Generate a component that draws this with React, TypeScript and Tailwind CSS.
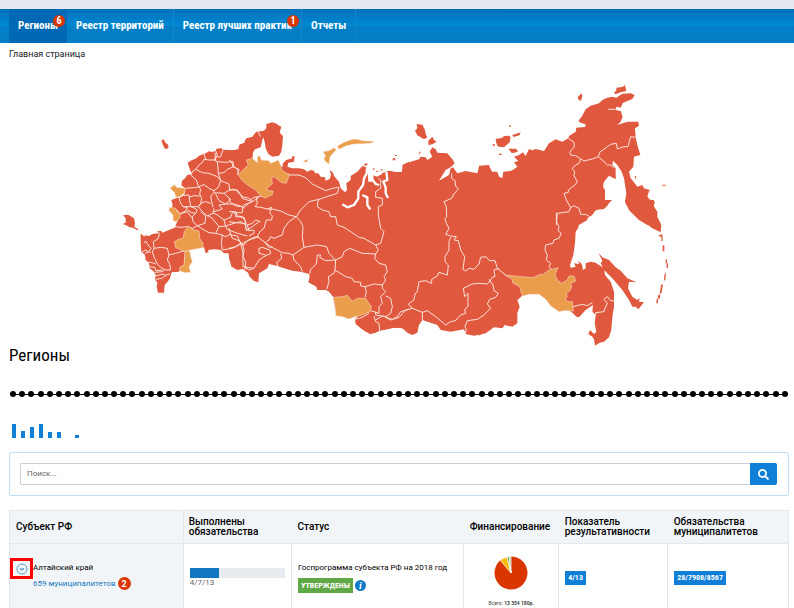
import React, { useState } from 'react'
import { FaSearch } from 'react-icons/fa'

const NAV = [
  { name: 'Регионы', href: '#regions', badge: 6, active: true },
  { name: 'Реестр территорий', href: '#territories' },
  { name: 'Реестр лучших практик', href: '#practices', badge: 1 },
  { name: 'Отчеты', href: '#reports' },
]

const BARS = [14, 7, 11, 14, 6, 6, 0, 3]

// Each part of the map has its own origin and is drawn at triple scale
const MAP = [
  {
    id: 'west',
    transform: 'translate(110 110) scale(0.33333)',
    land: [
      'M425 82 412 85 408 98 392 103 388 118 370 121 342 119 338 115 322 116 320 122 310 126 300 124 290 130 270 137 262 145 245 152 236 158 240 170 244 182 250 192 235 195 228 205 219 212 217 226 228 234 228 245 225 256 215 262 203 264 187 270 191 285 188 292 200 296 215 311 210 325 200 345 200 352 180 360 160 368 157 363 145 363 147 370 130 372 120 378 108 376 106 380 95 370 95 400 97 425 108 435 110 450 120 460 122 475 135 485 140 495 138 508 145 518 143 530 147 548 165 548 167 525 176 515 183 505 188 487 210 485 215 470 225 465 228 424 255 418 285 412 290 430 298 427 298 420 315 418 335 420 345 430 358 430 362 445 368 453 368 470 385 478 400 470 405 480 420 490 425 503Z',
      'M42 316 58 314 75 325 78 340 76 350 88 358 85 361 72 353 62 352 50 345 40 342 50 338 50 325Z',
      'M157 92 165 88 168 97 178 105 178 115 168 117 162 105Z',
    ],
    accent: [
      'M183 235 196 224 203 232 230 235 226 250 212 260 200 262 197 248Z',
      'M181 292 200 295 203 303 215 311 212 325 202 335 192 332 192 315 180 302Z',
      'M238 348 250 358 270 363 272 385 282 400 282 412 255 418 240 420 228 425 200 413 196 395 208 388 222 385 226 365Z',
      'M228 424 242 422 245 438 250 455 240 470 245 487 230 488 213 484 212 472 225 465Z',
    ],
    borders: [
      'M320 122 325 135 315 150 300 150 285 148 280 158 270 165 260 178 252 183 245 195',
      'M285 130 290 148M342 119 335 140 320 142 M318 128 320 152',
      'M315 150 325 155 350 157 372 155 374 170 355 178 345 188 328 190 325 155',
      'M260 178 280 188 300 190 325 200 335 212 328 232 315 242 300 235 285 224 275 228 265 232 230 235',
      'M245 195 262 210 268 228M328 190 335 212 360 222 362 240 345 250 315 248 315 242',
      'M374 170 385 178 390 190M362 240 370 238 385 240 400 260 420 265 430 275 450 262',
      'M315 248 305 258 308 275 312 292M345 250 365 268 350 282 330 272 320 252',
      'M350 282 330 285 340 297 315 305M350 282 375 282 400 290 405 285 430 275',
      'M268 228 275 238 272 252 278 265 275 280 268 290 245 290 242 272 240 255 225 256',
      'M240 262 255 257 272 258M210 260 213 275 222 290 235 292 230 303 215 311',
      'M315 295 312 310 295 318 280 305 268 290 278 278 290 275 305 280',
      'M222 290 245 290 258 295 265 300 260 310 248 308 235 300M260 310 250 320 252 335 265 347 288 340 290 318 275 305',
      'M215 311 235 305 250 325M200 350 215 352 235 350 250 355 265 347 285 360 300 368 320 370 330 350 310 325 295 316',
      'M312 308 325 315 345 330 365 322 370 308 400 308 402 290M345 330 350 348 375 340 395 335 410 345 412 362 430 350 450 335',
      'M330 350 350 348 355 358 385 370 415 378M320 370 340 375 337 400 340 420',
      'M340 375 350 380 365 372 370 385 390 392 400 402M340 420 370 415 390 405 400 400 425 388 450 380',
      'M378 308 380 320 405 322 412 345M400 402 405 420 402 440 410 455 408 480',
      'M150 365 150 378 145 388 133 395 135 415 155 412 175 415 180 435 200 430 228 422',
      'M180 435 175 450 182 462 185 480 170 480 155 472 145 462 135 440 130 425 135 415',
      'M97 428 108 420 125 428M105 400 110 393 117 405 126 415 120 425 108 430M110 455 130 458 140 462M120 470 138 472 140 482 160 480',
      'M138 487 160 485 168 478M138 498 165 492 172 500M140 508 160 505 170 495 183 492',
    ],
  },
  {
    id: 'north',
    transform: 'translate(230 110) scale(0.33333)',
    land: [
      'M0 122 28 120 30 108 45 100 50 88 70 80 82 65 105 62 112 55 112 42 130 37 145 42 148 46 157 50 152 68 162 78 160 105 157 125 150 137 130 140 118 132 110 115 108 100 103 82 100 90 95 112 78 118 72 128 70 150 88 160 120 160 150 160 160 172 162 160 172 150 190 145 188 140 197 138 195 155 178 158 175 170 190 175 210 175 225 178 235 185 245 180 255 182 258 190 268 190 275 200 288 202 290 212 302 207 306 195 302 180 312 188 315 198 330 215 335 235 348 247 354 240 352 220 365 210 365 198 385 185 400 168 412 172 416 185 418 215 430 215 430 195 445 200 460 190 480 182 500 186 520 186 520 165 540 155 540 668 525 655 500 652 480 655 452 662 440 668 425 672 410 665 395 655 380 642 378 628 390 615 320 605 312 560 300 545 290 540 265 540 262 530 238 517 242 500 240 492 215 485 190 482 160 473 145 468 120 462 115 475 90 490 88 517 75 513 62 500 55 483 40 477 25 480 8 470 0 445Z',
      'M405 162 413 160 417 166 408 168Z',
      'M432 175h4v4h-4zM442 183h5v3h-5zM455 178h5v4h-5zM462 188h4v4h-4zM490 148h10v3h-10zM498 135h5v3h-5z',
    ],
    accent: [
      'M28 195 50 172 58 165 52 150 70 145 85 158 85 140 93 138 97 150 120 152 125 160 148 150 155 165 158 180 172 190 182 192 172 220 158 218 135 200 128 205 130 222 113 235 118 242 132 243 130 255 120 258 110 265 95 258 80 240 60 228 40 212Z',
      'M325 108 345 97 370 88 385 88 400 92 432 94 433 98 405 101 375 102 350 108 330 118Z',
      'M282 125 300 122 315 113 322 120 312 130 303 140 300 163 288 153 285 145 290 138Z',
      'M223 153 235 148 237 155 228 157Z',
      'M312 562 340 560 355 556 370 574 385 565 410 565 420 580 427 590 423 605 400 615 378 620 360 627 340 620 320 617 320 590Z',
    ],
    borders: [
      'M0 150 8 155 12 170 30 178 25 195M85 62 95 80M0 240 20 240 35 255 40 265 60 272 75 262 98 258',
      'M0 265 5 278 20 288 40 290 42 295 65 275 70 270M82 262 85 280 78 290 95 292 115 297 128 292 122 308 130 318 128 330 112 330 105 355 95 362 85 378',
      'M115 297 135 298 155 303 180 315 202 320 215 335 222 350 220 380 225 412 192 435 180 430 160 428 125 410 105 395 85 380',
      'M202 320 180 335 165 355 160 375 135 385 125 380 120 390 112 395M202 320 215 300 240 275 270 268 300 258 325 250 330 232 310 235 290 242 250 222 230 203 210 195 180 195',
      'M268 268 265 290 280 300 300 305 305 320 320 320 325 345 345 352 365 365 390 382 405 385 440 405',
      'M440 405 455 400 465 365 455 355 448 315 448 290 460 285 460 265 440 262 440 245 455 235 455 210 448 205',
      'M225 412 265 405 293 410 300 430 320 450 340 440 345 425 362 415 380 422 400 430 440 432 448 420 440 405',
      'M440 432 437 445 450 460 470 465 475 485 465 500 470 510 460 525 435 522 408 530 395 528 395 517 375 515 370 505 350 500 318 480 320 450',
      'M192 435 195 450 215 470 220 485M155 430 158 445 143 458 147 470M320 450 290 452 272 442 275 435 265 435 262 462 245 478 242 492',
      'M318 480 315 490 298 500 300 515 293 538M408 530 412 545 408 562M460 525 460 535 470 545 455 560 460 580 450 590 450 610 425 602',
      'M470 558 485 565 490 590 485 610 470 620 440 615 440 605M378 628 400 622 420 610M435 618 440 635 450 640 452 662M440 630 460 618 490 628 505 620 515 605 540 598',
      'M0 305 20 305 25 318 40 320 50 335 50 355 60 362 75 360 75 370 60 378M0 335 20 338 50 340M60 362 55 345 70 340 80 330 95 335',
      'M0 355 5 375 25 378 35 400 45 405 55 392 75 382 85 380M0 415 20 410 35 400 42 430 42 470 75 475 90 450 105 440 125 430 122 420 100 412 90 415 90 430 110 435',
      'M45 470 60 480 75 475M105 395 120 412 130 410',
    ],
    water: [
      'M415 165 413 190 405 205 402 225 388 245 388 265 375 285 355 292 340 283M400 255 415 262 415 285 424 298',
      'M430 185 430 208 440 222 450 225M455 195 450 180M472 185 475 210 463 215 470 232 470 250 477 264',
    ],
  },
  {
    id: 'siberia',
    transform: 'translate(370 110) scale(0.33333)',
    land: [
      'M52 183 80 187 98 187 105 165 125 155 150 148 155 140 170 142 175 150 190 140 182 125 190 112 200 118 205 128 235 130 252 150 257 160 245 172 230 180 210 212 240 195 245 175 252 172 265 190 290 183 325 190 330 170 350 172 355 165 370 185 385 185 390 200 402 205 405 185 405 648 400 655 375 652 350 670 315 677 290 672 285 658 245 665 215 660 205 645 160 630 150 645 145 668 130 675 115 668 100 655 75 653 60 657 30 662 0 672 0 405 52 300Z',
      'M138 62 145 55 143 42 160 44 168 60 170 72 175 82 165 88 145 76Z',
      'M178 92 190 80 195 90 203 95 190 103 178 105Z',
      'M383 88 400 92 415 80 425 82 422 97 405 112 385 108Z',
      'M430 76 450 68 450 76 435 80ZM424 116 442 118 445 125 430 128ZM150 128l6-4-4 10zM72 144h6v4h-6zM78 135h4v3h-4zM372 102h4v4h-4zM391 131h5v3h-5zM420 46h5v3h-5z',
    ],
    accent: [],
    borders: [
      'M248 190 248 205 258 212 260 228 268 237 255 252 248 265 225 275 232 290 233 320 228 325 232 340 240 355 230 373 245 378 262 380 255 390 268 392 275 420 287 440 282 478 290 483 300 475 315 478 330 462 335 442 350 440 362 452 378 452 385 475 410 495',
      'M245 382 240 395 240 420 228 440 228 455 238 465 235 495 210 487 205 498 188 508 188 520 170 512 150 515 145 545 138 552 135 570 118 582 130 595 110 600 90 622 65 630 50 622',
      'M130 595 160 607 175 602 200 620 230 645 245 635 260 632 275 615 290 610 287 598 297 590 297 550 287 560 283 535 310 522 330 520 355 522 365 510 372 500 378 500 375 480 390 475',
      'M360 508 372 525 375 542 388 550 380 562 362 568 355 582 365 595 345 615 325 628 295 632 288 650 292 658 288 672M160 607 160 630',
    ],
  },
  {
    id: 'northeast',
    transform: 'translate(480 75) scale(0.33333)',
    land: [
      'M0 272 30 270 38 290 48 300 70 312 73 290 95 288 105 283 115 275 105 262 118 258 105 245 120 240 132 232 140 243 150 222 160 226 170 222 195 228 210 205 230 193 250 200 268 190 270 183 290 170 292 158 318 156 320 148 305 143 298 138 308 125 320 103 335 92 360 85 370 75 385 68 400 65 412 68 430 56 455 55 467 60 460 72 440 80 432 83 425 98 412 95 410 105 425 108 431 125 425 140 415 150 445 140 478 140 480 152 468 160 470 187 475 210 484 240 465 245 463 275 450 290 455 310 462 318 475 335 490 330 495 340 512 345 505 362 510 372 528 380 522 400 535 412 532 425 545 450 545 455 505 450 480 435 450 405 438 380 442 355 435 310 428 290 415 270 402 257 400 270 410 280 410 313 390 302 375 320 372 335 378 345 378 375 398 375 390 385 385 392 375 402 350 405 340 420 325 430 325 435 300 450 0 450Z',
      'M296 66 308 55 310 65 305 78 298 73ZM405 54 412 46 412 38 430 36 438 30 442 48 425 52 410 58ZM50 192 70 188 75 183 92 182 92 200 80 207 75 215 60 215 52 205Z',
      'M100 180 118 176 125 172 122 180 105 185ZM88 221 110 221 117 228 112 232 98 234ZM467 303 471 303 470 315ZM60 236h8v4h-8zM91 152h4v3h-4zM550 329h10v3h-10zM42 208h5v5h-5z',
    ],
    accent: [],
    borders: [
      'M268 190 285 202 286 215 272 232 275 240 290 242 305 252 300 265 290 270 280 280 287 290 285 302 295 320 288 330 268 345 268 352 255 355 262 375 275 398',
      'M305 252 315 258 340 252 358 245 362 232 385 215 395 208 412 205 415 222 435 215 447 215 455 185 470 187M358 245 375 260 385 270 395 270 405 280',
      'M275 398 285 392 300 400 305 418 320 418 332 425M275 398 270 410 235 415 232 450M388 103 410 103',
    ],
  },
  {
    id: 'far-east',
    transform: 'translate(480 200) scale(0.33333)',
    land: [
      'M400 0 385 10 365 20 345 35 330 50 315 62 300 72 297 85 290 95 288 130 283 165 273 195 275 203 290 200 285 190 300 192 298 182 308 192 312 210 320 205 320 190 335 185 350 188 375 205 378 225 395 245 405 275 405 320 400 350 397 390 390 412 375 425 362 428 348 437 345 418 340 410 328 402 333 390 345 402 352 395 347 370 350 345 340 335 342 315 320 330 300 352 292 350 282 340 240 310 180 275 130 287 115 300 122 320 115 340 115 370 100 380 75 375 45 378 25 392 0 407 0 0Z',
      'M438 0 525 0 522 15 535 35 535 50 547 75 545 97 520 85 490 62 455 35 440 10Z',
      'M358 158 370 172 390 180 410 202 425 212 445 235 472 247 450 245 447 265 460 290 475 300 482 294 480 305 495 307 478 328 470 320 460 320 450 300 430 270 400 235 375 210 365 190 370 182Z',
      'M537 106 550 103 551 122 547 124 547 112ZM551 136h5v18h-5zM560 178h4v12h-4zM563 190h4v14h-4zM556 225l5-8-2 22-4 4zM546 255l6-3-4 26-6 4zM538 285l6-2-2 14-6-2zM533 296h4v14h-5z',
    ],
    accent: [
      'M78 225 105 228 150 232 165 232 185 222 190 225 210 210 237 203 228 225 235 240 248 250 265 240 270 228 285 228 290 243 275 250 278 262 270 275 262 280 265 290 258 298 268 305 280 305 283 333 255 332 240 335 215 318 200 298 180 283 150 283 130 288 122 260 100 248 100 238Z',
    ],
    borders: [
      'M232 38 232 65 240 80 237 92 247 100 240 115 225 120 222 130 200 135 198 150 205 165 202 180 215 190 210 200 218 208',
      'M282 320 310 313 325 317 340 308M350 347 350 338 375 335 378 325 385 310 375 298 385 290 395 302 405 303',
    ],
  },
]

const RussiaMap: React.FC = () => (
  <svg
    viewBox="115 78 570 267"
    className="mx-auto block w-full max-w-[570px] overflow-visible"
    role="img"
    aria-label="Карта регионов"
  >
    {MAP.map((part) => (
      <g key={part.id} transform={part.transform} fill="#e0593e">
        {part.land.map((d) => <path key={d} d={d} />)}
      </g>
    ))}
    {MAP.map((part) => (
      <g key={part.id} transform={part.transform} fill="none" strokeLinejoin="round">
        {part.borders.map((d) => <path key={d} d={d} stroke="#fbe3dc" strokeWidth="3" />)}
        {part.accent.map((d) => <path key={d} d={d} fill="#ea9d4a" stroke="#fbe3dc" strokeWidth="1.6" />)}
        {part.water?.map((d) => <path key={d} d={d} stroke="#fff" strokeWidth="7" />)}
      </g>
    ))}
  </svg>
)

const Header: React.FC = () => (
  <header className="border-t-[9px] border-[#e4e9f1]">
    <nav className="flex h-[34px] bg-[linear-gradient(#0070ba_0%,#0089d4_50%,#047fc7_51%,#047fc7_100%)] pl-[9px]">
      {NAV.map((item) => (
        <a
          key={item.name}
          href={item.href}
          className={
            item.active
              ? 'relative flex items-center bg-[#0069b5] px-[9px] text-[11px] font-bold text-white'
              : 'relative flex items-center border-r border-[#1587c9] px-[9px] text-[11px] font-bold text-white'
          }
        >
          {item.name}
          {item.badge && (
            <span className="absolute top-[6px] right-[2px] flex h-3 w-3 items-center justify-center rounded-full bg-[#d93600] text-[10px] leading-3">
              {item.badge}
            </span>
          )}
        </a>
      ))}
    </nav>
  </header>
)

const Timeline: React.FC = () => (
  <div className="relative flex h-[6px] items-center justify-between px-px before:absolute before:inset-x-1 before:h-px before:bg-black">
    {Array.from({ length: 85 }, (_, i) => (
      <span key={i} className="h-[6px] w-[6px] rounded-full bg-black" />
    ))}
  </div>
)

const PieChart: React.FC = () => (
  <svg viewBox="-17 -17 34 34" className="mx-auto h-[34px] w-[34px]" aria-hidden="true">
    <circle r="16.5" fill="#d93600" />
    <g stroke="#fff" strokeWidth="0.8">
      <path d="M0 0 -10.6 -12.6A16.5 16.5 0 0 1 -4 -16Z" fill="#fdb900" />
      <path d="M0 0 -4 -16A16.5 16.5 0 0 1 -1.8 -16.4Z" fill="#4f9a3c" />
      <path d="M0 0 -1.8 -16.4A16.5 16.5 0 0 1 0 -16.5Z" fill="#8dc07c" />
    </g>
  </svg>
)

const App: React.FC = () => {
  const [query, setQuery] = useState('')

  return (
    <div className="overflow-x-hidden bg-white font-['Roboto_Condensed','Liberation_Sans_Narrow',Roboto,sans-serif] text-black">
      <Header />
      <main className="pr-[5px] pl-[9px]">
        <p className="pt-1 font-[Roboto,sans-serif] text-[9px] leading-[14px] text-[#222]">Главная страница</p>
        <div className="pt-[17px]">
          <RussiaMap />
        </div>
        <h1 className="text-[17px] leading-5">Регионы</h1>

        <div className="pt-[26px]">
          <Timeline />
        </div>

        <div className="mt-[27px] flex h-[14px] items-end gap-[5px] pl-[3px]">
          {BARS.map((height, i) => (
            <span key={i} className="w-1 bg-[#0f7fd8]" style={{ height }} />
          ))}
        </div>

        <form
          className="mt-[14px] rounded-[2px] border border-[#bfdff5] p-[10px] font-[Roboto,sans-serif]"
          onSubmit={(e) => e.preventDefault()}
        >
          <div className="flex h-[22px] pr-px">
            <input
              type="text"
              aria-label="Поиск"
              placeholder="Поиск..."
              value={query}
              onChange={(e) => setQuery(e.target.value)}
              className="min-w-0 flex-1 rounded-l-[2px] border border-r-0 border-[#c9cfd8] px-[6px] text-[8px] placeholder:text-[#666]"
            />
            <button
              type="submit"
              aria-label="Найти"
              className="flex w-[27px] items-center justify-center rounded-r-[2px] bg-[#0f7fd8] text-white"
            >
              <FaSearch size={11} />
            </button>
          </div>
        </form>

        <table className="mt-[14px] w-full table-fixed border-collapse font-[Roboto,sans-serif] text-[8px]">
          <colgroup>
            <col className="w-[22.3%]" />
            <col className="w-[13.9%]" />
            <col className="w-[22.1%]" />
            <col className="w-[12.2%]" />
            <col className="w-[14%]" />
            <col />
          </colgroup>
          <thead>
            <tr className="h-[33px] bg-[#f1f5f8] text-left text-[10px] leading-[10px]">
              <th className="border border-[#e3e8ed] pl-[6px] font-medium">Субъект РФ</th>
              <th className="border-y border-[#e3e8ed] pl-[5px] font-medium">Выполнены обязательства</th>
              <th className="border-y border-[#e3e8ed] pl-[6px] font-medium">Статус</th>
              <th className="border-y border-[#e3e8ed] pl-[6px] font-medium">Финансирование</th>
              <th className="border-y border-[#e3e8ed] pl-[6px] font-medium">Показатель результативности</th>
              <th className="border-y border-r border-[#e3e8ed] pl-[6px] font-medium">Обязательства муниципалитетов</th>
            </tr>
          </thead>
          <tbody>
            <tr className="h-16 align-top">
              <td className="border-x border-[#e3e8ed] bg-[#f1f5f8] pt-[14px]">
                <div className="flex items-start">
                  <button
                    type="button"
                    aria-label="Развернуть"
                    className="flex h-[21px] w-[23px] items-center justify-center border-[3px] border-[#fe0000]"
                  >
                    <svg viewBox="0 0 12 12" className="h-3 w-3" fill="none" stroke="#4d8fc0">
                      <circle cx="6" cy="6" r="5" strokeWidth="0.9" />
                      <path d="M4 5.2 6 7l2-1.8" strokeWidth="1.2" />
                    </svg>
                  </button>
                  <div className="pt-1 leading-3">
                    <p>Алтайский край</p>
                    <p className="flex items-center gap-[2px] pt-[3px]">
                      <a href="#altai" className="text-[#1577bd]">659 муниципалитетов</a>
                      <span className="flex h-[13px] w-[13px] items-center justify-center rounded-full bg-[#d93600] text-[9px] font-bold text-white">
                        2
                      </span>
                    </p>
                  </div>
                </div>
              </td>
              <td className="border-x border-[#e3e8ed] px-[6px] pt-6">
                <div className="h-[10px] bg-[#e8ecf0]">
                  <div className="h-full bg-[#1278c4]" style={{ width: `${(4 / 13) * 100}%` }} />
                </div>
                <p className="text-[8px] leading-[10px] text-[#666]">4/7/13</p>
              </td>
              <td className="border-x border-[#e3e8ed] pt-[18px] pl-[6px] whitespace-nowrap">
                <p className="leading-3">Госпрограмма субъекта РФ на 2018 год</p>
                <div className="flex items-center gap-[2px] pt-1">
                  <span className="bg-[#5fa845] px-[3px] font-['Roboto_Condensed',Roboto,sans-serif] text-[8px] leading-[15px] font-bold text-white">
                    УТВЕРЖДЕНЫ
                  </span>
                  <span className="flex h-[11px] w-[11px] items-center justify-center rounded-full bg-[#1278c4] font-['Liberation_Serif',serif] text-[10px] leading-none font-bold text-white italic">
                    i
                  </span>
                </div>
              </td>
              <td className="border-x border-[#e3e8ed] pt-3 text-center">
                <PieChart />
                <p className="pt-[9px] text-[5px] leading-[8px] text-[#444]">
                  Всего: <b>13 354 180р.</b>
                </p>
              </td>
              <td className="border-x border-[#e3e8ed] pt-[27px] pl-[6px]">
                <span className="inline-block bg-[#0f7fd8] px-[3px] font-['Roboto_Condensed',Roboto,sans-serif] text-[8px] leading-[14px] font-bold text-white">
                  4/13
                </span>
              </td>
              <td className="border-x border-[#e3e8ed] pt-[27px] pl-[6px]">
                <span className="inline-block bg-[#0f7fd8] px-[3px] font-['Roboto_Condensed',Roboto,sans-serif] text-[8px] leading-[14px] font-bold text-white">
                  28/7908/8567
                </span>
              </td>
            </tr>
          </tbody>
        </table>
      </main>
    </div>
  )
}

export default App
